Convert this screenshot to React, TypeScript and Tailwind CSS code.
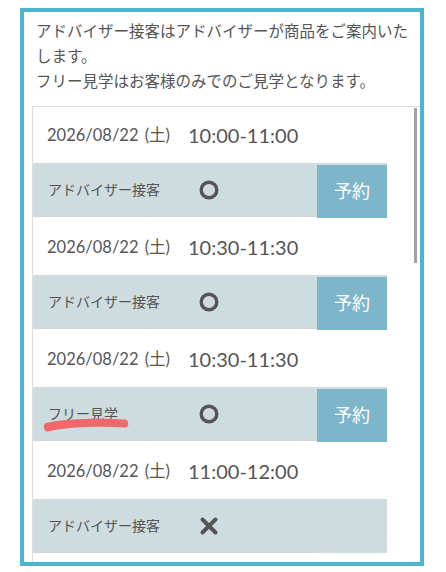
import React from "react";

const font = { fontFamily: 'Lato, "Noto Sans CJK JP", sans-serif' };

type Slot = { time: string; label: string; ok: boolean; mark?: boolean };

const slots: Slot[] = [
  { time: "10:00-11:00", label: "アドバイザー接客", ok: true },
  { time: "10:30-11:30", label: "アドバイザー接客", ok: true },
  { time: "10:30-11:30", label: "フリー見学", ok: true, mark: true },
  { time: "11:00-12:00", label: "アドバイザー接客", ok: false },
];

function Circle() {
  return (
    <svg width="20" height="20" viewBox="0 0 20 20">
      <circle cx="10" cy="10" r="7.8" fill="none" stroke="#555" strokeWidth="3.4" />
    </svg>
  );
}

function Cross() {
  return (
    <svg width="20" height="20" viewBox="0 0 20 20">
      <path d="M3.5 3.5 L16.5 16.5 M16.5 3.5 L3.5 16.5" stroke="#555" strokeWidth="4" strokeLinecap="round" />
    </svg>
  );
}

function Row({ s }: { s: Slot }) {
  return (
    <div>
      <div className="flex h-[56px] items-center pl-[14px] text-[#555]">
        <span className="text-[16.5px]">
          2026/08/22 <span className="ml-[2px]">(土)</span>
        </span>
        <span className="ml-[18px] text-[20px]">{s.time}</span>
      </div>
      <div className="flex h-[56px] w-[354px]">
        <div className="flex h-[54px] flex-1 items-center border-b border-[#d4d4d4] bg-[#cddcde]">
          <div className="relative w-[162px] pl-[15px] text-[14px] text-[#555]">
            {s.label}
            {s.mark && (
              <svg className="absolute left-[10px] top-[13px]" width="88" height="18" viewBox="0 0 88 18">
                <path
                  d="M3 7 C 20 3, 55 2, 82 3.5 C 86 4, 86.5 11, 83 11.5 C 55 10, 25 11, 5 15.5 C 0.5 16, -0.5 8, 3 7 Z"
                  fill="#f2676b"
                />
              </svg>
            )}
          </div>
          <div className="flex w-[28px] items-center justify-center">{s.ok ? <Circle /> : <Cross />}</div>
        </div>
        <div className="flex w-[70px] flex-col">
          <div className="h-[2px] bg-[#cddcde]" />
          {s.ok ? (
            <div className="flex h-[53px] items-center justify-center bg-[#7db6ca] text-[18px] text-white">予約</div>
          ) : (
            <div className="h-[52px] bg-[#cddcde]" />
          )}
        </div>
      </div>
    </div>
  );
}

export default function App() {
  return (
    <div className="h-[572px] w-[446px] bg-white" style={font}>
      <div className="relative ml-[20px] mt-[8px] h-[558px] w-[404px] overflow-hidden border-4 border-[#4db4d0] bg-white">
        <p className="pl-[12px] pt-[7px] text-[15.5px] leading-[25px] text-[#555]">
          アドバイザー接客はアドバイザーが商品をご案内いた
          <br />
          します。
          <br />
          フリー見学はお客様のみでのご見学となります。
        </p>
        <div className="relative ml-[8px] mt-[12px] h-[500px] border-l border-t border-[#dddddd]">
          {slots.map((s, i) => (
            <Row key={i} s={s} />
          ))}
          <div className="absolute right-[3px] top-[1px] h-[155px] w-[3px] bg-[#a3a3a3]" />
        </div>
      </div>
    </div>
  );
}
